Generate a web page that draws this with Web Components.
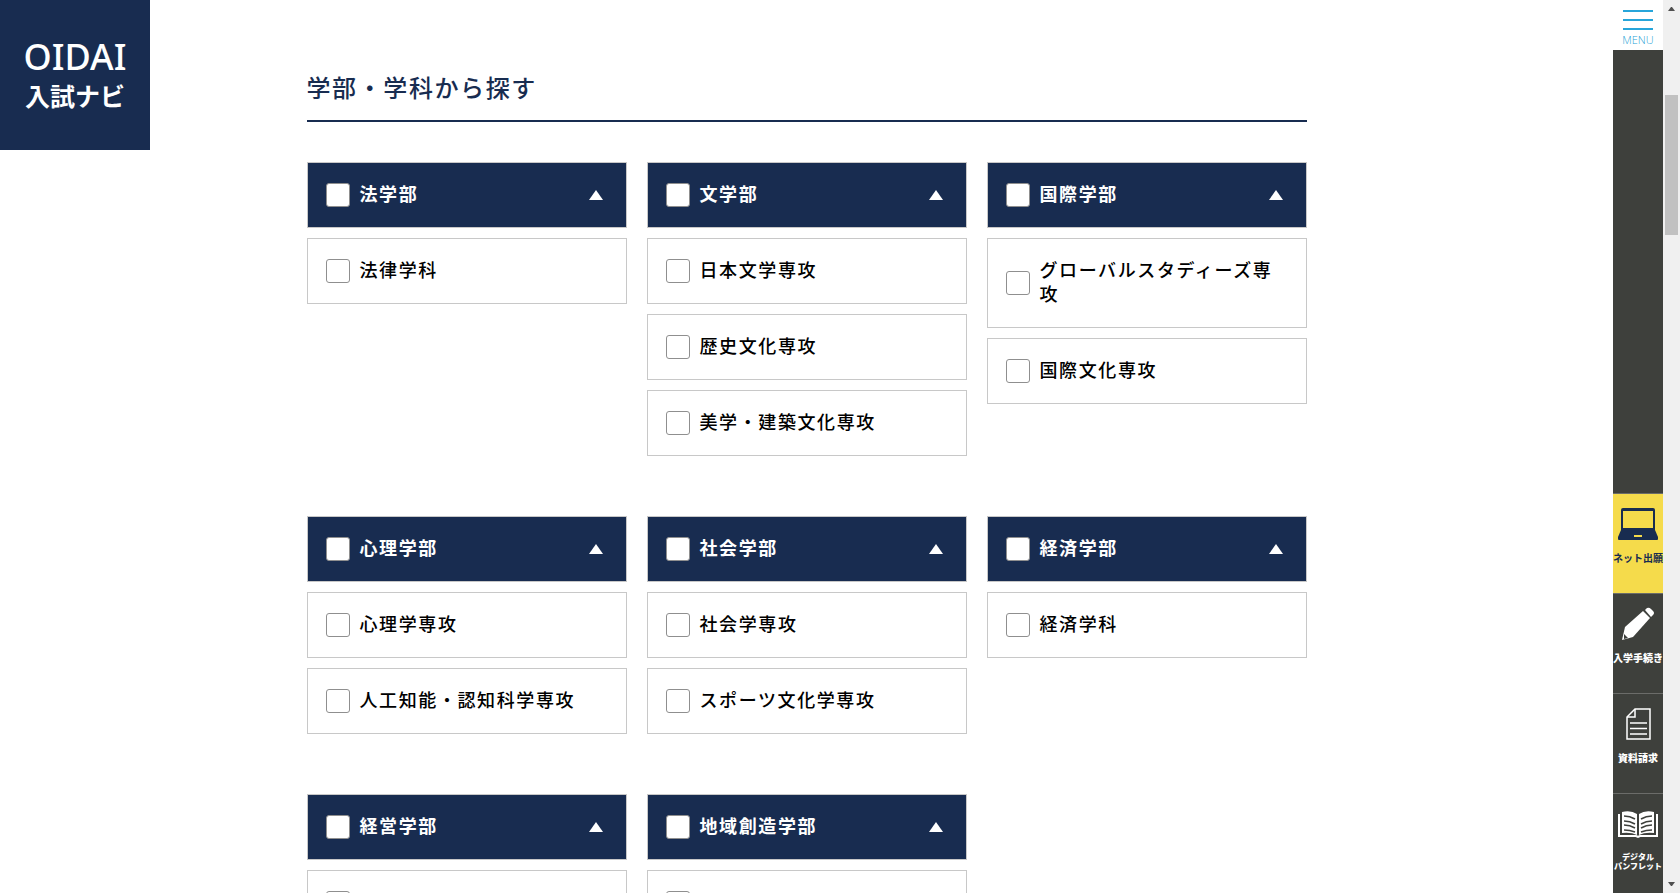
<!DOCTYPE html>
<html lang="ja">
<head>
<meta charset="utf-8">
<meta name="viewport" content="width=device-width, initial-scale=1">
<title>OIDAI 入試ナビ</title>
<style>
  :root {
    --navy: #182c50;
    --dark: #3e403c;
    --yellow: #f5db4b;
    --line: #c8c8c8;
    --check: #8f8f8f;
  }
  body {
    margin: 0;
    background: #fff;
    color: #000;
    font-family: "Noto Sans CJK JP", sans-serif;
    font-size: 16px;
    letter-spacing: .1em;
  }
</style>
</head>
<body>

<page-shell>
  <site-logo slot="logo"></site-logo>

  <search-section heading="学部・学科から探す">
    <faculty-group name="法学部">
      <course-item>法律学科</course-item>
    </faculty-group>
    <faculty-group name="文学部">
      <course-item>日本文学専攻</course-item>
      <course-item>歴史文化専攻</course-item>
      <course-item>美学・建築文化専攻</course-item>
    </faculty-group>
    <faculty-group name="国際学部">
      <course-item>グローバルスタディーズ専攻</course-item>
      <course-item>国際文化専攻</course-item>
    </faculty-group>
    <faculty-group name="心理学部">
      <course-item>心理学専攻</course-item>
      <course-item>人工知能・認知科学専攻</course-item>
    </faculty-group>
    <faculty-group name="社会学部">
      <course-item>社会学専攻</course-item>
      <course-item>スポーツ文化学専攻</course-item>
    </faculty-group>
    <faculty-group name="経済学部">
      <course-item>経済学科</course-item>
    </faculty-group>
    <faculty-group name="経営学部">
      <course-item></course-item>
    </faculty-group>
    <faculty-group name="地域創造学部">
      <course-item></course-item>
    </faculty-group>
  </search-section>

  <side-nav slot="nav">
    <side-link class="entry">
      <svg slot="icon" width="40" height="36" viewBox="0 0 40 36">
        <path fill="#182c50" fill-rule="evenodd" d="M5 2h30a2 2 0 0 1 2 2v20H3V4a2 2 0 0 1 2-2zm0 3v17h30V5z"/>
        <path fill="#182c50" d="M3 24h34l3 7v2a1 1 0 0 1-1 1H1a1 1 0 0 1-1-1v-2z"/>
        <path fill="#f5db4b" d="M16 29h8v2h-8z"/>
      </svg>
      ネット出願
    </side-link>
    <side-link>
      <svg slot="icon" width="40" height="36" viewBox="0 0 40 36">
        <path fill="#fff" d="M4 34l3-13L25 5l7 7-17 19z"/>
        <path fill="#fff" d="M27 4l2-2q2-1 4 1l2 2q2 2 0 4l-2 2z"/>
        <path fill="#3e403c" d="M6 28l4 4-4 1z"/>
      </svg>
      入学手続き
    </side-link>
    <side-link>
      <svg slot="icon" width="40" height="36" viewBox="0 0 40 36" fill="none" stroke="#fff">
        <path stroke-width="1.5" d="M17 3h15v30H9V11z"/>
        <path stroke-width="1.5" d="M17 3v8H9"/>
        <path stroke-width="1.5" d="M12 17h17M12 22.500h17M12 28h17"/>
      </svg>
      資料請求
    </side-link>
    <side-link class="small">
      <svg slot="icon" width="40" height="36" viewBox="0 0 40 36">
        <path fill="#fff" d="M4 6q9-2 15 2v21q-6-3-15-2zM36 6q-9-2-15 2v21q6-3 15-2z"/>
        <path fill="none" stroke="#fff" stroke-width="2" d="M1 8v22h17l2 1 2-1h17V8"/>
        <path fill="none" stroke="#3e403c" stroke-width="1.500" d="M6 10q6 0 11 3M6 15q6 0 11 3M6 19q6 0 11 3M6 24q6 0 11 2M34 10q-6 0-11 3M34 15q-6 0-11 3M34 19q-6 0-11 3M34 24q-6 0-11 2"/>
      </svg>
      デジタル<br>パンフレット
    </side-link>
  </side-nav>

  <scroll-rail slot="rail"></scroll-rail>
</page-shell>

<script>
class PageShell extends HTMLElement {
  constructor() {
    super();
    this.attachShadow({ mode: "open" }).innerHTML = `
      <style>
        :host {
          display: grid;
          grid-template-columns: minmax(0, 1fr) 50px 17px;
          height: 100vh;
          overflow: hidden;
        }
        /* the logo floats over the top left corner of the content */
        .logo { grid-area: 1 / 1; place-self: start; z-index: 1; }
        main { grid-area: 1 / 1; overflow: hidden; }
        .nav { grid-area: 1 / 2; }
        .rail { grid-area: 1 / 3; }
      </style>
      <div class="logo"><slot name="logo"></slot></div>
      <main><slot></slot></main>
      <slot class="nav" name="nav"></slot>
      <slot class="rail" name="rail"></slot>
    `;
  }
}
customElements.define("page-shell", PageShell);

class SiteLogo extends HTMLElement {
  constructor() {
    super();
    this.attachShadow({ mode: "open" }).innerHTML = `
      <style>
        :host { display: block; }
        a {
          display: flex;
          flex-direction: column;
          align-items: center;
          justify-content: center;
          box-sizing: border-box;
          width: 150px;
          height: 150px;
          padding-bottom: 4px;
          background: var(--navy);
          color: #fff;
          text-decoration: none;
          letter-spacing: 0;
        }
        .en { font: 500 36px/44px "Noto Sans", sans-serif; }
        .ja { font-size: 25px; line-height: 32px; font-weight: 700; }
      </style>
      <a href="#"><span class="en">OIDAI</span><span class="ja">入試ナビ</span></a>
    `;
  }
}
customElements.define("site-logo", SiteLogo);

class SearchSection extends HTMLElement {
  connectedCallback() {
    this.attachShadow({ mode: "open" }).innerHTML = `
      <style>
        :host {
          display: block;
          max-width: 1000px;
          margin: 0 auto;
          padding: 70px 20px 60px;
        }
        h2 {
          margin: 0 0 40px;
          padding-bottom: 16px;
          border-bottom: 2px solid var(--navy);
          color: var(--navy);
          font-size: 24px;
          line-height: 34px;
          font-weight: 500;
        }
        .groups {
          display: grid;
          grid-template-columns: repeat(3, minmax(0, 1fr));
          gap: 60px 20px;
          align-items: start;
        }
      </style>
      <h2>${this.getAttribute("heading")}</h2>
      <div class="groups"><slot></slot></div>
    `;
  }
}
customElements.define("search-section", SearchSection);

const checkStyles = `
  label {
    display: flex;
    flex: 1;
    align-items: center;
    gap: 10px;
    font-size: 18px;
    line-height: 24px;
    cursor: pointer;
  }
  /* CJK glyphs sit low in their line, lift them to the middle of the box */
  label span { margin: -2px 0 2px; }
  input {
    appearance: none;
    flex: none;
    width: 24px;
    height: 24px;
    margin: 0;
    border: 1px solid var(--check);
    border-radius: 3px;
    background: #fff;
  }
  input:checked { box-shadow: inset 0 0 0 5px #fff; background: var(--navy); }
`;

class FacultyGroup extends HTMLElement {
  connectedCallback() {
    const name = this.getAttribute("name");
    this.attachShadow({ mode: "open" }).innerHTML = `
      <style>
        :host { display: block; }
        ${checkStyles}
        header {
          display: flex;
          align-items: center;
          padding: 20px 18px;
          border: 1px solid var(--line);
          background: var(--navy);
          color: #fff;
          font-weight: 700;
        }
        button {
          width: 24px;
          height: 24px;
          padding: 0;
          border: 0;
          background: none;
          cursor: pointer;
        }
        button svg { display: block; margin: auto; }
        button[aria-expanded="false"] svg { transform: rotate(180deg); }
        .courses { display: flex; flex-direction: column; gap: 10px; margin-top: 10px; }
        .courses[hidden] { display: none; }
      </style>
      <header>
        <label><input type="checkbox"><span>${name}</span></label>
        <button type="button" aria-expanded="true" aria-label="${name}">
          <svg width="14" height="10" viewBox="0 0 14 10"><path fill="#fff" d="M7 0l7 10H0z"/></svg>
        </button>
      </header>
      <div class="courses"><slot></slot></div>
    `;
    const button = this.shadowRoot.querySelector("button");
    const courses = this.shadowRoot.querySelector(".courses");
    button.addEventListener("click", () => {
      courses.hidden = !courses.hidden;
      button.setAttribute("aria-expanded", String(!courses.hidden));
    });
  }
}
customElements.define("faculty-group", FacultyGroup);

class CourseItem extends HTMLElement {
  constructor() {
    super();
    this.attachShadow({ mode: "open" }).innerHTML = `
      <style>
        :host {
          display: flex;
          padding: 20px 18px;
          border: 1px solid var(--line);
          font-weight: 500;
        }
        ${checkStyles}
      </style>
      <label><input type="checkbox"><span><slot></slot></span></label>
    `;
  }
}
customElements.define("course-item", CourseItem);

class SideNav extends HTMLElement {
  constructor() {
    super();
    this.attachShadow({ mode: "open" }).innerHTML = `
      <style>
        :host {
          display: flex;
          flex-direction: column;
          height: 100vh;
          background: var(--dark);
          letter-spacing: 0;
        }
        button {
          display: flex;
          flex-direction: column;
          align-items: center;
          height: 50px;
          padding: 10px 0 0;
          border: 0;
          background: #fff;
          color: #1f9fd6;
          font: 300 11px/14px "Open Sans", sans-serif;
          cursor: pointer;
        }
        button svg { display: block; margin-bottom: 3px; }
        nav { margin-top: auto; }
      </style>
      <button type="button">
        <svg width="30" height="20" viewBox="0 0 30 20"><path fill="#27a5da" d="M0 0h30v2H0zM0 9h30v2H0zM0 18h30v2H0z"/></svg>
        MENU
      </button>
      <nav><slot></slot></nav>
    `;
  }
}
customElements.define("side-nav", SideNav);

class SideLink extends HTMLElement {
  constructor() {
    super();
    this.attachShadow({ mode: "open" }).innerHTML = `
      <style>
        :host { display: block; }
        a {
          display: flex;
          flex-direction: column;
          align-items: center;
          box-sizing: border-box;
          height: 100px;
          padding-top: 12px;
          border-top: 1px solid #6b6c69;
          color: #fff;
          font-size: 10px;
          line-height: 20px;
          font-weight: 900;
          text-align: center;
          text-decoration: none;
          white-space: nowrap;
        }
        span { margin-top: 6px; }
        :host(.entry) a { background: var(--yellow); color: var(--navy); font-weight: 700; }
        :host(.small) a { font-size: 8px; line-height: 9px; }
        :host(.small) span { margin-top: 10px; }
      </style>
      <a href="#"><slot name="icon"></slot><span><slot></slot></span></a>
    `;
  }
}
customElements.define("side-link", SideLink);

class ScrollRail extends HTMLElement {
  constructor() {
    super();
    this.attachShadow({ mode: "open" }).innerHTML = `
      <style>
        :host {
          display: flex;
          flex-direction: column;
          align-items: center;
          height: 100vh;
          background: #f0f0f0;
        }
        svg { display: block; flex: none; }
        .track { flex: 1; width: 13px; padding-top: 78px; }
        .thumb { height: 140px; background: #c1c1c1; }
      </style>
      <svg width="17" height="17" viewBox="0 0 17 17"><path fill="#505050" d="M5 11l3-4h1l3 4z"/></svg>
      <div class="track"><div class="thumb"></div></div>
      <svg width="17" height="17" viewBox="0 0 17 17"><path fill="#505050" d="M5 6h7l-3 4H8z"/></svg>
    `;
  }
}
customElements.define("scroll-rail", ScrollRail);
</script>
</body>
</html>
